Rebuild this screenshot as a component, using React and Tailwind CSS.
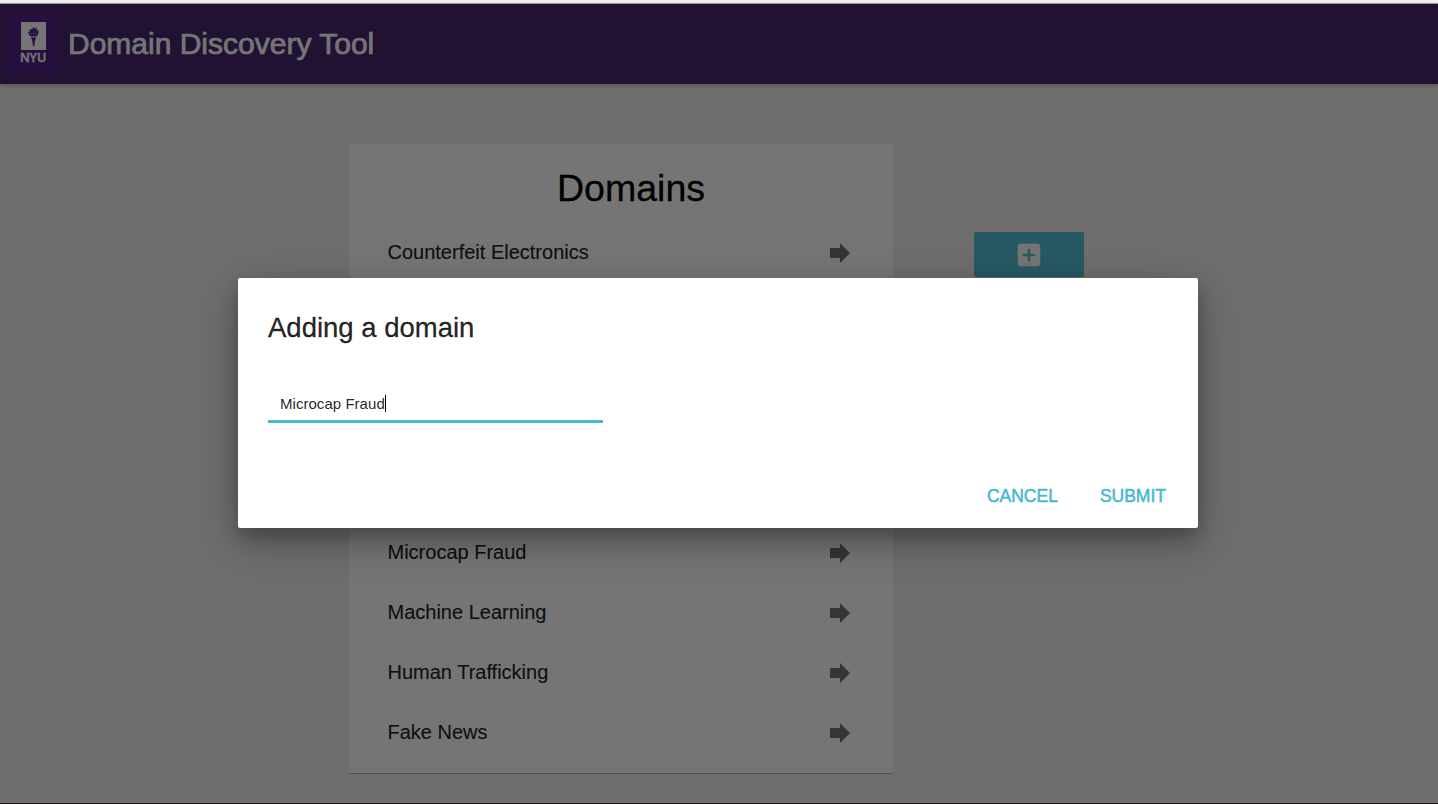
import React from "react";

const FIRST = ["Counterfeit Electronics"];
const REST = ["Microcap Fraud", "Machine Learning", "Human Trafficking", "Fake News"];

function Logo() {
  return (
    <div className="flex h-[60px] w-[50px] flex-col items-center bg-[#4f2189] pt-2">
      <svg className="h-7 w-[25px]" viewBox="0 0 25 28">
        <path fill="#fff" d="M0 0h25v28H0z" />
        <path
          fill="#4f2189"
          d="M10.200 15.600h4.800v1.300h-.8l-1 7.300h-1.200l-1-7.300h-.8zM10.300 14.600C8.500 14 7.200 12.200 7.300 9.500c.5.500.9.500 1.200.3-.1-1.500.5-2.600 1.800-3.300 0 .8.200 1.200.7 1.300.1-1.300 1.300-1.800 2.300-3-.1 1.100.1 1.600.7 2.100.5-.2.9-.6 1.100-1.300.8 1.200 1 2 .8 3 .6 0 1.100-.3 1.500-.7.5 3-.5 5.900-2.700 6.700z"
        />
        <path
          fill="none"
          stroke="#fff"
          strokeWidth=".5"
          opacity=".6"
          d="M9.600 10c.2 1.700 1 2.300 1.900 3.300M13.600 8.500c-1.700 1.500-.9 2.800-.9 4.600M15.500 9.500c-.2 1.600-1.100 2.300-1.400 3.800"
        />
      </svg>
      <span className="mt-px font-['Open_Sans',sans-serif] text-[12.500px] leading-[13px] font-semibold tracking-[-0.1px] text-white [-webkit-text-stroke:0.4px_white]">
        NYU
      </span>
    </div>
  );
}

function DomainRow({ name }) {
  return (
    <li className="flex h-15 items-center justify-between pr-[38px] pl-[38.500px]">
      <span className="text-xl leading-6 text-black/87 [-webkit-text-stroke:0.2px_rgba(0,0,0,0.87)]">{name}</span>
      <svg className="mt-0.5 h-[30px] w-[30px] text-[#757575]" viewBox="0 0 24 24" fill="currentColor">
        <path d="M12 8V4l8 8-8 8v-4H4V8z" />
      </svg>
    </li>
  );
}

export default function App() {
  return (
    <div className="relative flex h-[804px] w-full flex-col overflow-hidden bg-[#f0f0f0] font-['Liberation_Sans',Arial,sans-serif]">
      <div className="h-1 shrink-0 border-b border-[#a8a8a8] bg-[#f3f3f3]" />
      <header className="flex h-20 shrink-0 items-center bg-[#48276f] pl-2 shadow-[0_1px_6px_rgba(0,0,0,0.12),0_1px_4px_rgba(0,0,0,0.2)]">
        <Logo />
        <h1 className="ml-2.5 text-[30px] leading-10 text-white [-webkit-text-stroke:0.7px_white]">
          Domain Discovery Tool
        </h1>
      </header>

      <main className="flex grow items-start border-b border-[#3a2733] pt-[60px] pl-[349px]">
        <section className="h-[630px] w-[544px] border-b border-[#a9abc4] bg-white">
          <h2 className="pt-[21px] pl-5 text-center text-[37.500px] leading-[46px] [-webkit-text-stroke:0.3px_black]">
            Domains
          </h2>
          <ul className="mt-[11px]">
            {FIRST.map((n) => (
              <DomainRow key={n} name={n} />
            ))}
          </ul>
          <ul className="mt-60">
            {REST.map((n) => (
              <DomainRow key={n} name={n} />
            ))}
          </ul>
        </section>
        <button className="mt-[88px] ml-[81px] flex h-[45px] w-[110px] items-center justify-center rounded-[2px] bg-[#55c3da]">
          <svg className="h-[30px] w-[30px] text-white" viewBox="0 0 24 24" fill="currentColor">
            <path d="M19 3H5c-1.110 0-2 .9-2 2v14c0 1.100.89 2 2 2h14c1.100 0 2-.9 2-2V5c0-1.100-.9-2-2-2zm-2 10h-4v4h-2v-4H7v-2h4V7h2v4h4v2z" />
          </svg>
        </button>
      </main>

      <div className="absolute inset-x-0 top-1 bottom-0 flex items-start justify-center bg-black/54 pr-0.5">
        <div
          role="dialog"
          className="mt-[274px] flex h-[250px] w-[960px] flex-col rounded-[2px] bg-white px-[30px] shadow-[0_14px_45px_rgba(0,0,0,0.25),0_10px_18px_rgba(0,0,0,0.22)]"
        >
          <h3 className="mt-[30px] text-[27.5px] leading-10 text-black/87 [-webkit-text-stroke:0.3px_rgba(0,0,0,0.87)]">
            Adding a domain
          </h3>
          <div className="mt-[41px] flex h-[34px] w-[335px] items-center border-b-3 border-[#47b8d1] pb-0.5 pl-3">
            <span className="text-[15px] leading-5 tracking-[0.04px] text-black/87">Microcap Fraud</span>
            <span className="h-[17px] w-px bg-black" />
          </div>
          <div className="mt-[60px] flex justify-end gap-[42px] pr-0.5 text-[17.500px] leading-[26px] text-[#47b8d1] [-webkit-text-stroke:0.5px_#47b8d1]">
            <button>CANCEL</button>
            <button>SUBMIT</button>
          </div>
        </div>
      </div>
    </div>
  );
}
